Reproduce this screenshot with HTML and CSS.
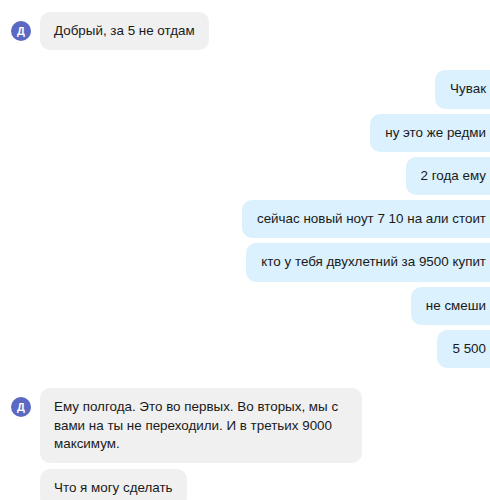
FILE: index.html
```html
<!DOCTYPE html>
<html lang="ru">
<head>
  <meta charset="UTF-8" />
  <meta name="viewport" content="width=device-width, initial-scale=1.0"/>
  <title>Чат</title>
  <link rel="stylesheet" href="styles.css">
</head>
<body>
  <div class="chat">
    <div class="group incoming">
      <div class="avatar">Д</div>
      <div class="bubbles">
        <div class="bubble">Добрый, за 5 не отдам</div>
      </div>
    </div>

    <div class="group outgoing">
      <div class="bubbles">
        <div class="bubble">Чувак</div>
        <div class="bubble">ну это же редми</div>
        <div class="bubble">2 года ему</div>
        <div class="bubble">сейчас новый ноут 7 10 на али стоит</div>
        <div class="bubble">кто у тебя двухлетний за 9500 купит</div>
        <div class="bubble">не смеши</div>
        <div class="bubble">5 500</div>
      </div>
    </div>

    <div class="group incoming">
      <div class="avatar">Д</div>
      <div class="bubbles">
        <div class="bubble">Ему полгода. Это во первых. Во вторых, мы с вами на ты не переходили. И в третьих 9000 максимум.</div>
        <div class="bubble">Что я могу сделать</div>
      </div>
    </div>
  </div>
</body>
</html>
```

FILE: styles.css
```css
:root {
  --bg: #ffffff;
  --in-bubble: #f0f0f0;
  --out-bubble: #dbf1fd;
  --avatar: #5b69c3;
  --text: #1a1a1a;
  --font-family: 'Liberation Sans', Arial, sans-serif;
}

body {
  margin: 0;
  background-color: var(--bg);
  font-family: var(--font-family);
  color: var(--text);
  overflow: hidden;
}

.chat {
  display: flex;
  flex-direction: column;
  gap: 20px;
  padding: 12px 0 0 11px;
  margin-right: -11px;
}

.group {
  display: flex;
  align-items: flex-start;
}

.outgoing {
  justify-content: flex-end;
}

.avatar {
  flex: none;
  width: 20px;
  height: 20px;
  margin-top: 9px;
  margin-right: 9px;
  border-radius: 50%;
  background-color: var(--avatar);
  color: #fff;
  font-size: 11px;
  font-weight: bold;
  line-height: 20px;
  text-align: center;
}

.bubbles {
  display: flex;
  flex-direction: column;
  align-items: flex-start;
  gap: 6px;
}

.outgoing .bubbles {
  align-items: flex-end;
  gap: 5px;
}

.bubble {
  max-width: 294px;
  padding: 10px 14px;
  border-radius: 10px;
  background-color: var(--in-bubble);
  font-size: 13.4px;
  line-height: 18.3px;
}

.outgoing .bubble {
  background-color: var(--out-bubble);
  padding: 10px 15px;
}
```
